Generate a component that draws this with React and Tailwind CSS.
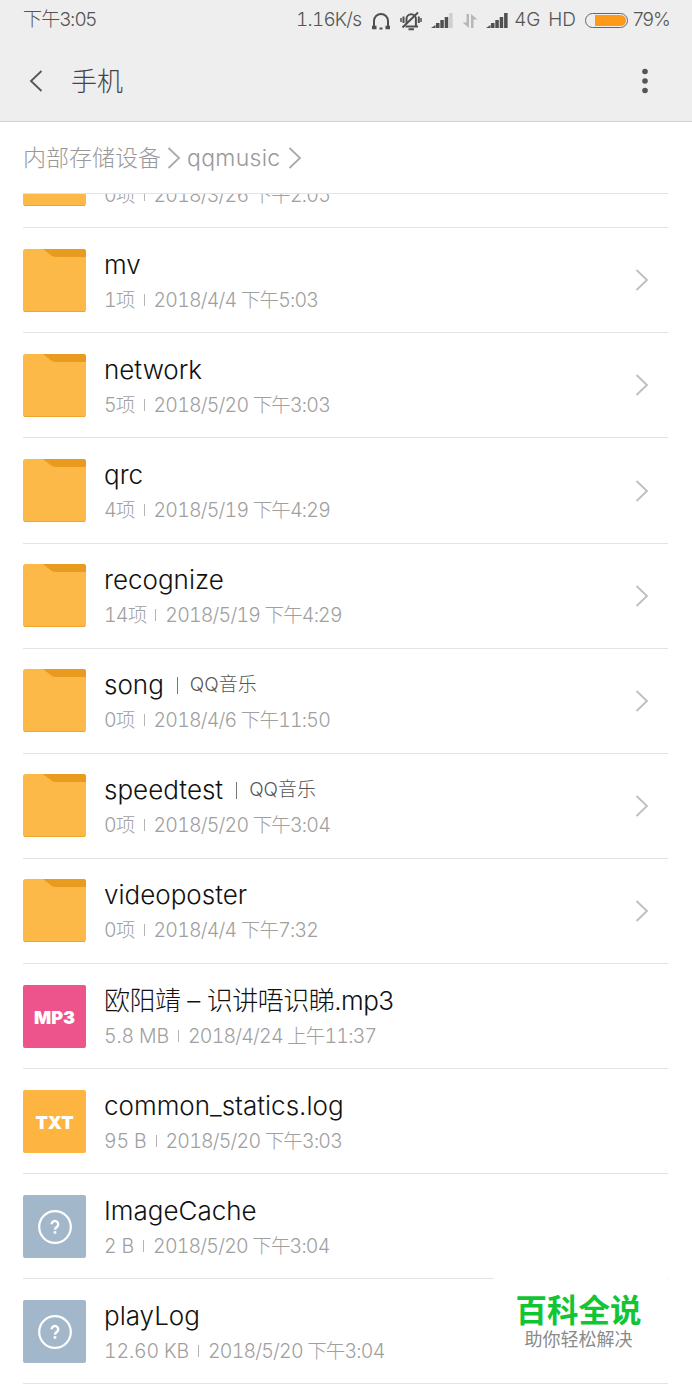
import React from "react";

const files = [
  { name: "mv", type: "folder", size: "1项", date: "2018/4/4 下午5:03" },
  { name: "network", type: "folder", size: "5项", date: "2018/5/20 下午3:03" },
  { name: "qrc", type: "folder", size: "4项", date: "2018/5/19 下午4:29" },
  { name: "recognize", type: "folder", size: "14项", date: "2018/5/19 下午4:29" },
  { name: "song", type: "folder", app: "QQ音乐", size: "0项", date: "2018/4/6 下午11:50" },
  { name: "speedtest", type: "folder", app: "QQ音乐", size: "0项", date: "2018/5/20 下午3:04" },
  { name: "videoposter", type: "folder", size: "0项", date: "2018/4/4 下午7:32" },
  { name: "欧阳靖 – 识讲唔识睇.mp3", type: "mp3", size: "5.8 MB", date: "2018/4/24 上午11:37" },
  { name: "common_statics.log", type: "txt", size: "95 B", date: "2018/5/20 下午3:03" },
  { name: "ImageCache", type: "unknown", size: "2 B", date: "2018/5/20 下午3:04" },
  { name: "playLog", type: "unknown", size: "12.60 KB", date: "2018/5/20 下午3:04" },
];

const FolderIcon = () => (
  <svg viewBox="0 0 63 63" className="h-[63px] w-[63px] shrink-0">
    <rect width="63" height="63" rx="2.5" fill="#fcb947" />
    <path d="M20 0H60.5Q63 0 63 2.5V8H33Q29.500 8 27.500 6Z" fill="#e99b20" />
    <path d="M1 62.500H62" stroke="#eda632" strokeWidth="1" />
  </svg>
);

const Tile = ({ className, children }) => (
  <div
    className={`flex h-[63px] w-[63px] shrink-0 items-center justify-center rounded-[2px] pt-0.5 ${className}`}
  >
    {children}
  </div>
);

const UnknownIcon = () => (
  <svg viewBox="0 0 34 34" className="h-[34px] w-[34px]" fill="none" stroke="#fff">
    <circle cx="17" cy="17" r="15.800" strokeWidth="2.200" />
    <path d="M13.600 14.300a3.300 3.300 0 1 1 5.400 2.500c-1.400 1-2 1.500-2 2.900" strokeWidth="2.400" />
    <path d="M17 21.200v2.500" strokeWidth="2.600" />
  </svg>
);

function FileIcon({ type }) {
  if (type === "folder") return <FolderIcon />;
  if (type === "mp3")
    return (
      <Tile className="bg-[#ed548c]">
        <span className="font-['Inter'] text-[18px] font-black text-white">MP3</span>
      </Tile>
    );
  if (type === "txt")
    return (
      <Tile className="bg-[#feb440]">
        <span className="font-['Inter'] text-[18px] font-black text-white">TXT</span>
      </Tile>
    );
  return (
    <Tile className="bg-[#a3b7ca]">
      <UnknownIcon />
    </Tile>
  );
}

const Chevron = ({ className }) => (
  <svg viewBox="0 0 14 22" className={className} fill="none" stroke="currentColor" strokeWidth="1.800">
    <path d="M1.500 1L12 11L1.500 21" />
  </svg>
);

const Meta = ({ size, date }) => (
  <div className="flex items-center text-[19.5px] leading-6 font-light tracking-[-0.8px] text-[#a0a0a0] tabular-nums">
    <span className={size.endsWith("B") ? "tracking-[-0.15px]" : ""}>{size}</span>
    <span className="mx-[9px] h-3 w-px bg-[#b5b5b5]" />
    <span>{date}</span>
  </div>
);

const Row = ({ file }) => (
  <li className="flex h-[105.1px] shrink-0 items-center border-b border-[#e3e3e3]">
    <FileIcon type={file.type} />
    <div className="ml-[18px] flex flex-1 flex-col gap-[5px] pb-[2px] whitespace-nowrap">
      <div className="flex h-9 items-center text-[26px] leading-9 font-light text-[#111]">
        <span className={file.type === "mp3" ? "tracking-[-0.5px]" : ""}>{file.name}</span>
        {file.app && (
          <>
            <span className="mr-3 ml-[13px] h-[17px] w-px bg-[#777]" />
            <span className="text-[19px] text-[#555]">{file.app}</span>
          </>
        )}
      </div>
      <Meta size={file.size} date={file.date} />
    </div>
    {file.type === "folder" && <Chevron className="mr-[19px] h-[22px] w-[14px] text-[#bebebe]" />}
  </li>
);

const Signal = ({ weak }) => (
  <svg viewBox="0 0 22 15" className="h-[15px] w-[22px]" fill="#505050">
    <path d="M0 15L4.500 12V15Z" />
    <rect x="5" y="10" width="3.500" height="5" />
    <rect x="9.300" y="7" width="3.500" height="8" />
    <rect x="13.700" y="4" width="3.500" height="11" />
    <rect x="18.100" y="0" width="3.500" height="15" fill={weak ? "#cfcfcf" : "#505050"} />
  </svg>
);

const StatusBar = () => (
  <div className="flex h-10 items-center pt-px pr-[22px] pl-[23px] text-[19px] font-light text-[#555]">
    <span className="tracking-[-0.8px]">下午3:05</span>
    <span className="ml-auto tracking-[-0.8px] tabular-nums">1.16K/s</span>
    <svg viewBox="0 0 20 18" className="ml-[10px] h-[18px] w-5" fill="none" stroke="#505050" strokeWidth="2">
      <path d="M3 15V9a7 7 0 0 1 14 0v6" />
      <path d="M1 15.500H5.500M14.500 15.500H19" strokeWidth="3.500" />
      <path d="M8.500 16.500H11.500" />
    </svg>
    <svg viewBox="0 0 22 20" className="ml-[9px] h-5 w-[22px]" fill="none" stroke="#505050" strokeWidth="2">
      <path d="M5.500 15.500H18M6.500 13V8a4.700 4.700 0 0 1 9.400 0V15M8.500 18.300H14" />
      <path d="M2.500 16.500L18 1.500" />
      <path d="M3.500 5.500V12M18.800 5.500V12" />
      <path d="M1 7V11M21 7V11" strokeWidth="1.500" />
    </svg>
    <span className="ml-[9px]">
      <Signal weak />
    </span>
    <svg viewBox="0 0 16 16" className="ml-[9px] h-4 w-4" fill="#b8b8b8">
      <path d="M4.500 1H7V15L0.500 9.500H4.500Z" />
      <path d="M9 15V1L15.500 6.500H11.500V15Z" />
    </svg>
    <span className="ml-2">
      <Signal />
    </span>
    <span className="ml-[6px]">4G</span>
    <span className="ml-[8px]">HD</span>
    <span className="ml-[9px] flex h-[15px] w-[43px] justify-end rounded-full border border-[#666] p-px">
      <span className="w-[31px] rounded-r-full bg-[#fd9a19]" />
    </span>
    <span className="ml-[5px] tracking-[-0.9px]">79%</span>
  </div>
);

export default function App() {
  return (
    <div className="relative flex h-[1384px] w-[692px] flex-col overflow-hidden bg-white font-['Inter','Noto_Sans_CJK_SC',sans-serif] whitespace-nowrap">
      <header className="h-[122px] shrink-0 border-b border-[#d2d2d2] bg-[#eee]">
        <StatusBar />
        <div className="flex h-[82px] items-center pr-[44px] pl-[29px] text-[#555]">
          <Chevron className="h-6 w-[14px] rotate-180" />
          <h1 className="ml-7 text-[26px] font-light text-[#444]">手机</h1>
          <svg viewBox="0 0 6 26" className="ml-auto h-[26px] w-[6px]" fill="#555">
            <circle cx="3" cy="3.500" r="2.800" />
            <circle cx="3" cy="13" r="2.800" />
            <circle cx="3" cy="22.500" r="2.800" />
          </svg>
        </div>
      </header>

      <nav className="mr-6 ml-[23px] flex h-[72px] shrink-0 items-center border-b border-[#e3e3e3] pt-px text-[23px] font-light text-[#999]">
        <span>内部存储设备</span>
        <Chevron className="mx-[6px] h-[22px] w-[14px] text-[#aaa]" />
        <span className="tracking-[0.3px]">qqmusic</span>
        <Chevron className="ml-[7px] h-[22px] w-[14px] text-[#aaa]" />
      </nav>

      <ul className="mr-6 ml-[23px] flex flex-1 flex-col overflow-hidden">
        <li className="flex h-[34.3px] shrink-0 flex-col justify-end overflow-hidden border-b border-[#e3e3e3]">
          <div className="flex h-[105px] shrink-0 items-center">
            <FolderIcon />
            <div className="ml-[18px] pt-10">
              <Meta size="0项" date="2018/3/26 下午2:05" />
            </div>
          </div>
        </li>
        {files.map((file) => (
          <Row key={file.name} file={file} />
        ))}
      </ul>

      {/* site mark over the bottom right corner */}
      <div className="absolute right-[25px] bottom-[6px] flex h-[102px] w-[173px] flex-col items-center bg-white pt-3 pr-1 font-['Noto_Sans_CJK_SC',sans-serif]">
        <span className="text-[31.5px] leading-10 font-bold text-[#12c535]">百科全说</span>
        <span className="text-[18px] leading-5 text-[#8a8a8a]">助你轻松解决</span>
      </div>
    </div>
  );
}
